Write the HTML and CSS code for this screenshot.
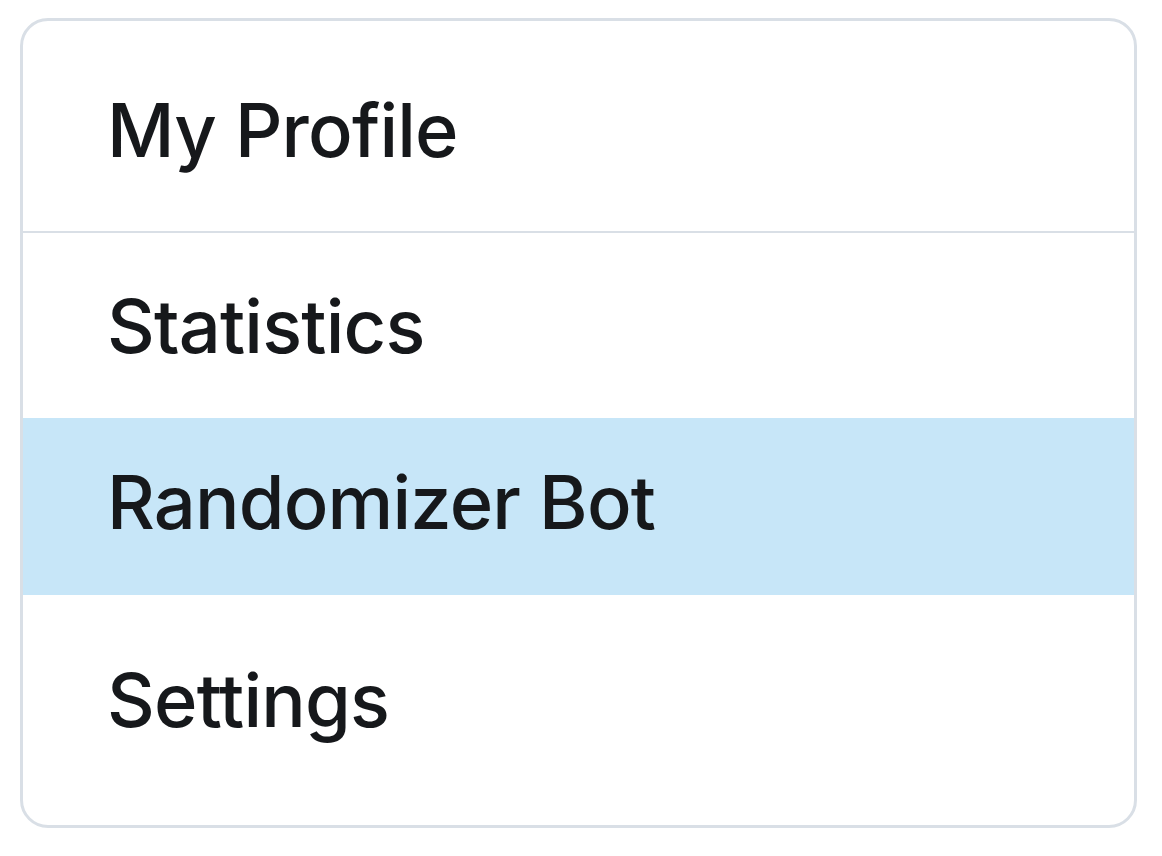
FILE: index.html
```html
<!DOCTYPE html>
<html lang="en">
<head>
    <meta charset="UTF-8">
    <meta name="viewport" content="width=device-width, initial-scale=1.0">
    <title>Menu</title>
    <link rel="stylesheet" href="styles.css">
</head>
<body>
    <nav class="menu">
        <a class="menu-item item-profile" href="#">My Profile</a>
        <a class="menu-item item-stats" href="#">Statistics</a>
        <a class="menu-item item-bot active" href="#">Randomizer Bot</a>
        <a class="menu-item item-settings" href="#">Settings</a>
    </nav>
</body>
</html>
```

FILE: styles.css
```css
body {
    margin: 0;
    background: #ffffff;
    font-family: Inter, "Noto Sans", Arial, sans-serif;
}
.menu {
    width: 1111px;
    margin: 18px 0 0 20px;
    border: 3px solid #d9dfe6;
    border-radius: 28px;
    overflow: hidden;
    display: flex;
    flex-direction: column;
}
.menu-item {
    display: flex;
    align-items: center;
    box-sizing: border-box;
    padding-left: 84px;
    font-size: 74px;
    font-weight: 500;
    line-height: 1;
    color: #16181b;
    text-decoration: none;
    letter-spacing: -0.8px;
}
.item-profile {
    height: 212px;
    padding-top: 8px;
    border-bottom: 2px solid #d9dfe6;
}
.item-stats {
    height: 185px;
}
.item-bot {
    height: 177px;
    padding-bottom: 10px;
}
.item-settings {
    height: 230px;
    padding-bottom: 20px;
}
.active {
    background-color: #c7e6f8;
}
```
